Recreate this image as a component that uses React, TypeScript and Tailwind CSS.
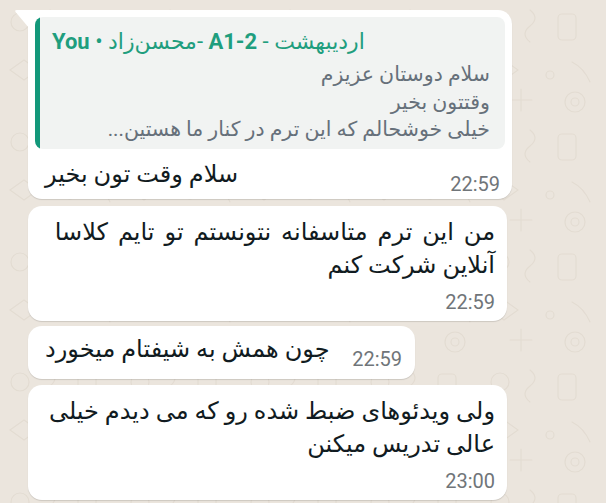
import React from "react";

const FONT = { fontFamily: "Roboto, 'DejaVu Sans', sans-serif" };

function Time({ t }: { t: string }) {
  return (
    <span className="text-[20px] leading-[22px] text-[#707579] whitespace-nowrap" dir="ltr">
      {t}
    </span>
  );
}

function Wallpaper() {
  return (
    <svg className="absolute inset-0 pointer-events-none" width="606" height="503">
      <defs>
        <pattern id="doodle" width="120" height="120" patternUnits="userSpaceOnUse">
          <g fill="none" stroke="#e3dcd2" strokeWidth="1.2" strokeLinecap="round">
            <circle cx="20" cy="22" r="9" />
            <path d="M50 10 q10 8 0 16 q-10 8 0 16" />
            <rect x="78" y="14" width="18" height="26" rx="4" />
            <path d="M10 70 l14 -10 l14 10 l-14 10 z" />
            <circle cx="70" cy="75" r="4" />
            <path d="M92 62 q12 6 18 20" />
            <path d="M30 100 h22 m-11 -11 v22" />
            <circle cx="95" cy="102" r="10" />
            <circle cx="95" cy="102" r="4" />
          </g>
        </pattern>
      </defs>
      <rect width="606" height="503" fill="url(#doodle)" />
    </svg>
  );
}

export default function App() {
  return (
    <div
      className="relative w-[606px] h-[503px] overflow-hidden bg-[#ebe5dd]"
      style={FONT}
    >
      <Wallpaper />
      <div className="relative flex flex-col items-start pl-[28px] pt-[10px]">
        {/* Bubble 1 */}
        <div className="relative w-[484px] bg-white rounded-[14px] rounded-tl-none shadow-[0_1px_1px_rgba(0,0,0,0.13)] px-[7px] pt-[7px] pb-[4px]">
          <svg
            className="absolute left-[-14px] top-0"
            width="15"
            height="20"
            viewBox="0 0 15 20"
          >
            <path d="M15 0 H3 Q0 0 1.8 2.2 L15 18 Z" fill="#ffffff" />
          </svg>
          <div className="flex rounded-[8px] overflow-hidden bg-[#f1f3f2]">
            <div className="w-[5px] bg-[#13987a] shrink-0" />
            <div className="flex-1 pl-[12px] pr-[15px] pt-[12px] pb-[5px]">
              <div className="flex justify-start">
                <div className="text-[22px] leading-[26px] text-[#1f9e7e] whitespace-nowrap" dir="rtl">
                  اردیبهشت - <span className="font-bold">A1-2</span> -محسن‌زاد • <span className="font-bold">You</span>
                </div>
              </div>
              <div className="mt-[6px] text-[20.5px] leading-[27.5px] text-[#66707a] text-right" dir="rtl">
                <div>سلام دوستان عزیزم</div>
                <div>وقتتون بخیر</div>
                <div>خیلی خوشحالم که این ترم در کنار ما هستین...</div>
              </div>
            </div>
          </div>
          <div className="flex items-end justify-between pl-[10px] pr-[5px] mt-[9.5px]">
            <div className="text-[24px] leading-[33px] text-[#111b21] pb-[3.5px]" dir="rtl">
              سلام وقت تون بخیر
            </div>
            <Time t="22:59" />
          </div>
        </div>

        {/* Bubble 2 */}
        <div className="mt-[7px] w-[479px] bg-white rounded-[14px] shadow-[0_1px_1px_rgba(0,0,0,0.13)] pt-[10px] pb-[8px] pl-[17px] pr-[12px] flex flex-col">
          <div className="text-[24px] leading-[33px] text-[#111b21] text-right" dir="rtl">
            <span className="[word-spacing:4px]">من این ترم متاسفانه نتونستم تو تایم کلاسا</span>
            <br />
            آنلاین شرکت کنم
          </div>
          <div className="flex justify-end mt-[9px]">
            <Time t="22:59" />
          </div>
        </div>

        {/* Bubble 3 */}
        <div className="mt-[5px] w-[387px] bg-white rounded-[14px] shadow-[0_1px_1px_rgba(0,0,0,0.13)] pt-[7.5px] pb-[9px] pl-[17px] pr-[13px] flex items-end justify-between">
          <div className="text-[24px] leading-[33px] text-[#111b21] pb-[3.5px]" dir="rtl">
            چون همش به شیفتام میخورد
          </div>
          <Time t="22:59" />
        </div>

        {/* Bubble 4 */}
        <div className="mt-[6px] w-[479px] bg-white rounded-[14px] shadow-[0_1px_1px_rgba(0,0,0,0.13)] pt-[10px] pb-[8px] pl-[17px] pr-[12px] flex flex-col">
          <div className="text-[24px] leading-[33px] text-[#111b21] text-right" dir="rtl">
            ولی ویدئوهای ضبط شده رو که می دیدم خیلی
            <br />
            عالی تدریس میکنن
          </div>
          <div className="flex justify-end mt-[9px]">
            <Time t="23:00" />
          </div>
        </div>
      </div>
    </div>
  );
}
